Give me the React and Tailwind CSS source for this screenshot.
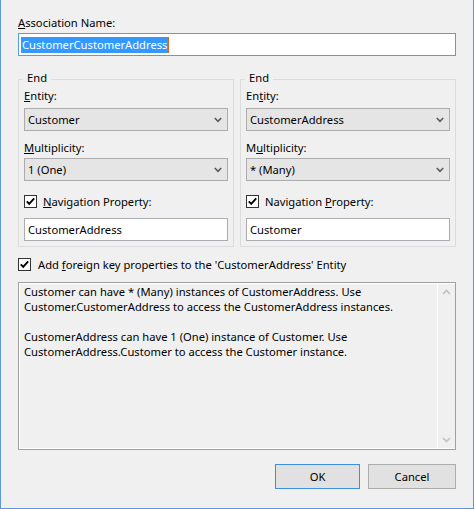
import React from "react";

function Check({ className = "" }) {
  return (
    <span className={"flex h-[13px] w-[13px] shrink-0 items-center justify-center border border-[#333] bg-white " + className}>
      <svg width="11" height="11" viewBox="0 0 11 11">
        <path d="M1.8 5.4 L4.2 7.9 L9.2 2.4" fill="none" stroke="#000" strokeWidth="1.9" />
      </svg>
    </span>
  );
}

function Combo({ value }) {
  return (
    <div className="flex h-[23px] items-center justify-between border border-[#acacac] bg-[#e5e5e5] pl-[3px] pr-[5px]">
      <span>{value}</span>
      <svg width="8" height="6" viewBox="0 0 8 6">
        <path d="M0.8 1 L4 4.3 L7.2 1" fill="none" stroke="#5a5a5a" strokeWidth="1.6" />
      </svg>
    </div>
  );
}

function TextBox({ value }) {
  return (
    <div className="flex h-[23px] items-center border border-[#abadb3] bg-white pl-[3px]">
      {value}
    </div>
  );
}

function EndGroup({ entity, entityLabel, multLabel, mult, navLabel, nav }) {
  return (
    <fieldset className="w-[216px] border border-[#dcdcdc] px-[5px] pb-[5px]">
      <legend className="ml-[-1px] px-[4px] pb-[3px] leading-[15px]">End</legend>
      <div className="leading-[15px]">{entityLabel}</div>
      <div className="mt-[5px]">
        <Combo value={entity} />
      </div>
      <div className="mt-[9px] leading-[15px]">{multLabel}</div>
      <div className="mt-[3px]">
        <Combo value={mult} />
      </div>
      <div className="mt-[13px] flex items-center gap-[6px] leading-[15px]">
        <Check />
        <span>{navLabel}</span>
      </div>
      <div className="mt-[9px]">
        <TextBox value={nav} />
      </div>
    </fieldset>
  );
}

export default function App() {
  return (
    <div className="h-[509px] w-[474px] border-x border-b border-[#5e96d8] bg-[#f0f0f0] px-[17px] font-['Noto_Sans',sans-serif] text-[11.2px] leading-[15px] text-black">
      <div className="pt-[15px]">
        <u>A</u>ssociation Name:
      </div>
      <div className="mt-[3px] flex h-[23px] items-center border border-[#569de5] bg-white pl-[2px]">
        <span className="bg-[#3399ff] px-px leading-[16px] text-white">CustomerCustomerAddress</span>
        <span className="h-[16px] w-px bg-[#d9641e]" />
      </div>

      <div className="mt-[14px] flex gap-[6px]">
        <EndGroup
          entityLabel={<><u>E</u>ntity:</>}
          entity="Customer"
          multLabel={<><u>M</u>ultiplicity:</>}
          mult="1 (One)"
          navLabel={<><u>N</u>avigation Property:</>}
          nav="CustomerAddress"
        />
        <EndGroup
          entityLabel={<>En<u>t</u>ity:</>}
          entity="CustomerAddress"
          multLabel={<>M<u>u</u>ltiplicity:</>}
          mult="* (Many)"
          navLabel={<>Navigation <u>P</u>roperty:</>}
          nav="Customer"
        />
      </div>

      <div className="mt-[10px] flex items-center gap-[7px]">
        <Check />
        <span>
          Add <u>f</u>oreign key properties to the 'CustomerAddress' Entity
        </span>
      </div>

      <div className="mt-[10px] flex h-[168px] border border-[#a0a0a0]">
        <div className="flex flex-1 border-l border-t border-b border-white">
          <div className="flex-1 pl-[4px] pt-0">
            <p>Customer can have * (Many) instances of CustomerAddress. Use</p>
            <p>Customer.CustomerAddress to access the CustomerAddress instances.</p>
            <p className="mt-[15px]">CustomerAddress can have 1 (One) instance of Customer. Use</p>
            <p>CustomerAddress.Customer to access the Customer instance.</p>
          </div>
          <div className="flex w-[18px] flex-col items-center justify-between border-l border-white py-[5px]">
            <svg width="9" height="6" viewBox="0 0 9 6">
              <path d="M1 5 L4.5 1.5 L8 5" fill="none" stroke="#c2c2c2" strokeWidth="1.7" />
            </svg>
            <svg width="9" height="6" viewBox="0 0 9 6">
              <path d="M1 1 L4.5 4.5 L8 1" fill="none" stroke="#c2c2c2" strokeWidth="1.7" />
            </svg>
          </div>
        </div>
      </div>

      <div className="mt-[14px] flex justify-end gap-[8px]">
        <button className="h-[25px] w-[85px] border border-[#3c8fe4] bg-[#e1e1e1]">OK</button>
        <button className="h-[25px] w-[88px] border border-[#adadad] bg-[#e1e1e1]">Cancel</button>
      </div>
    </div>
  );
}
